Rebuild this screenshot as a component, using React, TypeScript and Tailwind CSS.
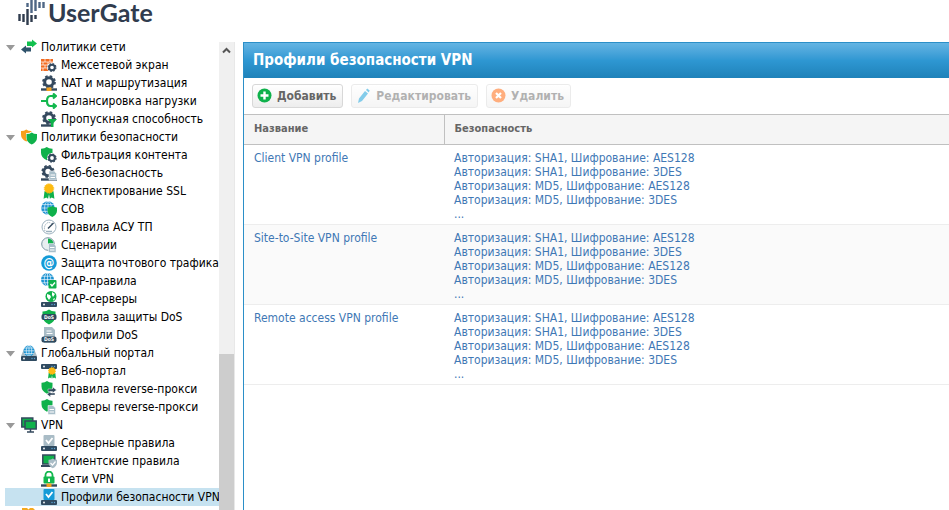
import type { ReactNode } from "react";

const NAVY = "#34495e";
const GREEN = "#0fb14b";

const SHIELD = "M0 1.5Q3 1.6 5 0Q7 1.6 10 1.5V5Q10 9 5 11.5Q0 9 0 5Z";

function Shield({ x, y, fill, s = 1 }: { x: number; y: number; fill: string; s?: number }) {
  return <path d={SHIELD} fill={fill} transform={`translate(${x} ${y}) scale(${s})`} />;
}

function Gear({ x, y, r, color = NAVY }: { x: number; y: number; r: number; color?: string }) {
  return (
    <g fill="none" stroke={color}>
      <circle cx={x} cy={y} r={r} strokeWidth={r * 0.7} />
      <circle cx={x} cy={y} r={r * 1.4} strokeWidth={r * 0.4} strokeDasharray={`${r * 0.6} ${r * 0.5}`} />
    </g>
  );
}

function Server({ y = 11, h = 5, x = 0, w = 16 }: { y?: number; h?: number; x?: number; w?: number }) {
  return (
    <g>
      <rect x={x} y={y} width={w} height={h} rx="1" fill="#2f4a60" />
      <circle cx={x + 3} cy={y + h / 2} r="0.9" fill="#fff" />
      <circle cx={x + w - 5} cy={y + h / 2} r="0.7" fill="#5fa8d8" />
      <circle cx={x + w - 2.5} cy={y + h / 2} r="0.7" fill="#5fa8d8" />
    </g>
  );
}

function Globe({ x, y, r, color = "#1d93d2" }: { x: number; y: number; r: number; color?: string }) {
  return (
    <g>
      <circle cx={x} cy={y} r={r} fill={color} />
      <g fill="none" stroke="#fff" strokeWidth="0.6">
        <ellipse cx={x} cy={y} rx={r / 2} ry={r} />
        <path d={`M${x} ${y - r}v${r * 2}M${x - r} ${y}h${r * 2}M${x - r * 0.9} ${y - r / 2}h${r * 1.8}M${x - r * 0.9} ${y + r / 2}h${r * 1.8}`} />
      </g>
    </g>
  );
}

function Doc({ x, y }: { x: number; y: number }) {
  return (
    <g>
      <path d={`M${x} ${y}h5l2.5 2.5v6.5h-7.5z`} fill="#a9bfca" stroke="#fff" strokeWidth="0.5" />
      <path d={`M${x + 1.5} ${y + 4}h4.5M${x + 1.5} ${y + 6.5}h4.5`} stroke="#fff" strokeWidth="1" />
    </g>
  );
}

function Medal({ x, y, r }: { x: number; y: number; r: number }) {
  return (
    <g>
      <path d={`M${x - r} ${y + r * 0.6}h${r * 2}l${r * 0.2} ${r * 1.7}l-${r * 0.6} -${r * 0.3}l-${r * 0.4} ${r * 0.3}l-${r * 0.2} -${r}l-${r * 0.2} ${r}l-${r * 0.4} -${r * 0.3}l-${r * 0.6} ${r * 0.3}z`} fill={GREEN} />
      <circle cx={x} cy={y} r={r} fill="#fdbb11" />
      <circle cx={x} cy={y} r={r * 1.05} fill="none" stroke="#fdbb11" strokeWidth="1" strokeDasharray="1.3 0.8" />
    </g>
  );
}

const Network = () => (
  <>
    <path d="M0 14.5h16" stroke={NAVY} strokeWidth="2.4" />
    <rect x="5.5" y="12.5" width="5" height="3.5" fill="#f5a01d" />
  </>
);

const DosLabel = ({ y }: { y: number }) => (
  <>
    <rect x="0.5" y={y} width="15" height="6" rx="2" fill="#2f4a60" />
    <text x="8" y={y + 4.8} textAnchor="middle" fontSize="5" fontWeight="700" fill="#fff">DoS</text>
  </>
);

const icons: Record<string, ReactNode> = {
  arrows: (
    <>
      <path d="M6 2.500h5V0.500l5 4-5 4V7H6z" fill="#12c04f" />
      <path d="M10 8.500H5V6.500l-5 4 5 4v-2h5z" fill="#2f536b" />
    </>
  ),
  firewall: (
    <>
      <path d="M0 2h12v12H0z" fill="#f26b21" />
      <path d="M0 5h12M0 8h12M0 11h12M4 2v3M9 2v3M2 5v3M7 5v3M4 8v3M2 11v3" stroke="#fff" strokeWidth="0.7" />
      <circle cx="11" cy="10.500" r="5" fill="#fff" />
      <Gear x={11} y={10.5} r={2.8} />
    </>
  ),
  nat: (
    <>
      <Gear x={8} y={7} r={4.3} />
      <Network />
    </>
  ),
  balance: (
    <path d="M0 8h5M15 3H9.500Q6 3 6 8T9.500 13H15M12 0.500L15 3l-3 2.500M12 10.500L15 13l-3 2.500" fill="none" stroke="#12b84e" strokeWidth="2.2" />
  ),
  bandwidth: (
    <>
      <Gear x={8} y={7} r={4.3} />
      <path d="M0 14.500h11" stroke={NAVY} strokeWidth="2.400" />
      <path d="M6.500 8h9.500l-3.500 4v4h-2.500v-4z" fill={GREEN} />
    </>
  ),
  shields: (
    <>
      <Shield x={0} y={0.5} fill="#f8a01b" s={1.05} />
      <Shield x={5} y={2.5} fill="#fff" s={1.15} />
      <Shield x={5.5} y={3.5} fill={GREEN} s={1.05} />
    </>
  ),
  shieldGear: (
    <>
      <Shield x={0} y={0} fill={GREEN} s={1.15} />
      <circle cx="11" cy="11" r="5" fill="#fff" />
      <Gear x={11} y={11} r={2.9} />
    </>
  ),
  web: (
    <>
      <Gear x={7} y={6.5} r={4.1} />
      <path d="M0 14.500h16" stroke={NAVY} strokeWidth="2.400" />
      <Doc x={8} y={6} />
    </>
  ),
  medal: <Medal x={8} y={5.5} r={4.5} />,
  globeShield: (
    <>
      <Globe x={7} y={7} r={6.8} />
      <Shield x={6.5} y={5} fill={GREEN} s={0.95} />
    </>
  ),
  gauge: (
    <>
      <circle cx="8" cy="8" r="7" fill="#fff" stroke="#9db2bf" />
      <path d="M4 12Q2.500 8 5 5t6 0" fill="none" stroke="#8da4b2" strokeDasharray="1.200 1" />
      <path d="M7 9.500L12.500 4" stroke={NAVY} strokeWidth="1.500" />
      <path d="M5 12.500h6" stroke="#9db2bf" strokeWidth="1.500" />
    </>
  ),
  scenario: (
    <>
      <circle cx="7" cy="7" r="6.300" fill="#e8eef1" stroke="#7d97a5" />
      <path d="M7 7V1.500A5.500 5.500 0 0 1 12.500 7z" fill={GREEN} />
      <Doc x={7.5} y={6.5} />
    </>
  ),
  mail: (
    <>
      <circle cx="8" cy="8" r="7.800" fill="#159bd7" />
      <text x="8" y="12" textAnchor="middle" fontSize="12" fontWeight="700" fill="#fff">@</text>
    </>
  ),
  icapRule: (
    <>
      <Globe x={6.5} y={6.5} r={6.5} />
      <rect x="7.500" y="7" width="8" height="8.500" rx="1" fill={GREEN} />
      <path d="M9.500 11l1.500 2 3-3.500" fill="none" stroke="#fff" strokeWidth="1.300" />
    </>
  ),
  icapServer: (
    <>
      <circle cx="10" cy="5.500" r="5.500" fill={GREEN} />
      <path d="M6 3l3 1 1 2-2 3-2-3zM11 1l3 2-2 3-1-2zM12 8l2-1-1 3z" fill="#fff" />
      <Server />
    </>
  ),
  dosRule: (
    <>
      <Shield x={1.5} y={0.5} fill={GREEN} s={1.3} />
      <DosLabel y={5} />
    </>
  ),
  dosProfile: (
    <>
      <path d="M3 0h8l3 3v13H3z" fill="#a9bcc6" />
      <path d="M5.500 4h5M5.500 6.500h6" stroke="#fff" />
      <DosLabel y={9.5} />
    </>
  ),
  portal: (
    <>
      <path d="M3 4h10l3 7H0z" fill="#a9bcc6" />
      <Globe x={8} y={5.8} r={5.5} />
      <Server />
    </>
  ),
  webPortal: (
    <>
      <Server y={1} h={5} />
      <Medal x={11} y={8} r={3.3} />
    </>
  ),
  reverseRule: (
    <>
      <Shield x={0.5} y={0} fill={GREEN} s={1.1} />
      <path d="M7 8h4.500V6l4 3-4 3v-1.500H7zM14 12h-4.500v-1.500l-3.500 2.800 3.500 2.700v-2h4.500z" fill={NAVY} stroke="#fff" strokeWidth="0.400" />
    </>
  ),
  reverseServer: (
    <>
      <Shield x={0.5} y={0} fill={GREEN} s={1.1} />
      <Doc x={7} y={6.5} />
    </>
  ),
  vpn: (
    <>
      <path d="M0.800 1h11v9h-11z" fill={GREEN} stroke={NAVY} strokeWidth="1.500" />
      <path d="M4 4h11.200v8H4z" fill={GREEN} stroke={NAVY} strokeWidth="1.500" />
      <path d="M9.500 12v3M6 15h7" stroke={NAVY} strokeWidth="1.500" />
    </>
  ),
  serverRule: (
    <>
      <rect x="2.500" y="0" width="11" height="11" rx="1" fill="#a9bcc6" />
      <path d="M5 5l2.500 3 4-5" fill="none" stroke="#fff" strokeWidth="1.800" />
      <Server />
    </>
  ),
  clientRule: (
    <>
      <path d="M1.800 2h12v9h-12z" fill={GREEN} stroke={NAVY} strokeWidth="1.500" />
      <path d="M0 13h10" stroke={NAVY} strokeWidth="2" />
      <Shield x={7.5} y={5.5} fill="#a9bcc6" s={0.85} />
      <path d="M9.500 10l2 2 3-3.500" fill="none" stroke="#fff" strokeWidth="1.200" />
    </>
  ),
  lock: (
    <>
      <path d="M4.500 6V4a3.500 3.500 0 0 1 7 0v2" fill="none" stroke="#12b84e" strokeWidth="1.800" />
      <rect x="2.500" y="5.500" width="11" height="7" rx="1" fill="#12b84e" />
      <path d="M8 7.500v3.500" stroke="#fff" strokeWidth="2" />
      <Network />
    </>
  ),
  vpnProfile: (
    <>
      <rect x="2.500" y="0" width="11" height="11" rx="1" fill="#159bd7" />
      <path d="M5 5l2.500 3 4-5" fill="none" stroke="#fff" strokeWidth="1.800" />
      <Server />
    </>
  ),
  folder: <path d="M1 1h5l1.500 1.500L9 1h3l2 2v12H1z" fill="#f5a91d" />,
};

const tree = [
  {
    icon: "arrows",
    label: "Политики сети",
    items: [
      ["firewall", "Межсетевой экран"],
      ["nat", "NAT и маршрутизация"],
      ["balance", "Балансировка нагрузки"],
      ["bandwidth", "Пропускная способность"],
    ],
  },
  {
    icon: "shields",
    label: "Политики безопасности",
    items: [
      ["shieldGear", "Фильтрация контента"],
      ["web", "Веб-безопасность"],
      ["medal", "Инспектирование SSL"],
      ["globeShield", "СОВ"],
      ["gauge", "Правила АСУ ТП"],
      ["scenario", "Сценарии"],
      ["mail", "Защита почтового трафика"],
      ["icapRule", "ICAP-правила"],
      ["icapServer", "ICAP-серверы"],
      ["dosRule", "Правила защиты DoS"],
      ["dosProfile", "Профили DoS"],
    ],
  },
  {
    icon: "portal",
    label: "Глобальный портал",
    items: [
      ["webPortal", "Веб-портал"],
      ["reverseRule", "Правила reverse-прокси"],
      ["reverseServer", "Серверы reverse-прокси"],
    ],
  },
  {
    icon: "vpn",
    label: "VPN",
    items: [
      ["serverRule", "Серверные правила"],
      ["clientRule", "Клиентские правила"],
      ["lock", "Сети VPN"],
      ["vpnProfile", "Профили безопасности VPN"],
    ],
  },
];

const ACTIVE = "vpnProfile";

const profiles = ["Client VPN profile", "Site-to-Site VPN profile", "Remote access VPN profile"];

const security = [
  "Авторизация: SHA1, Шифрование: AES128",
  "Авторизация: SHA1, Шифрование: 3DES",
  "Авторизация: MD5, Шифрование: AES128",
  "Авторизация: MD5, Шифрование: 3DES",
  "...",
];

function TreeIcon({ name }: { name: string }) {
  return (
    <svg viewBox="0 0 16 16" className="size-4 shrink-0" aria-hidden="true">
      {icons[name]}
    </svg>
  );
}

function Logo() {
  return (
    <div className="flex h-[38px] shrink-0 items-start pl-[17px] text-[#303c4e]">
      <svg viewBox="0 0 29 26" className="mr-[2px] h-[26px] w-[29px] shrink-0" aria-hidden="true">
        <path d="M2.500 14v7M6.500 14v8M10.500 9v16M14.500 15v7M18.500 15v4" stroke="#303c4e" strokeWidth="2.400" />
        <path d="M10.500 3v4M14.500 0v13M18.500 0v11M22.500 2v6M26.500 2v6" stroke="#4f6785" strokeWidth="2.400" />
      </svg>
      <span className="font-[Lato] text-[25px] leading-6 font-bold">UserGate</span>
    </div>
  );
}

function Sidebar() {
  return (
    <aside className="flex w-[235px] shrink-0 flex-col overflow-hidden">
      <Logo />
      <div className="flex min-h-0 flex-1">
        <nav className="min-w-0 flex-1 overflow-hidden pl-[5px]">
          {tree.map((group) => (
            <div key={group.icon}>
              <button type="button" className="flex h-[18px] w-full items-center whitespace-nowrap">
                <svg viewBox="0 0 16 16" className="size-4 shrink-0" aria-hidden="true">
                  <path d="M1 6h9l-4.500 5.500z" fill="#999" />
                </svg>
                <TreeIcon name={group.icon} />
                <span className="ml-1">{group.label}</span>
              </button>
              {group.items.map(([icon, label]) => (
                <a
                  key={icon}
                  href="#"
                  className={`flex h-[18px] items-center gap-1 pl-9 whitespace-nowrap ${icon === ACTIVE ? "bg-[#c6e2f0]" : ""}`}
                >
                  <TreeIcon name={icon} />
                  {label}
                </a>
              ))}
            </div>
          ))}
          <div className="flex h-[18px] items-center pl-4">
            <TreeIcon name="folder" />
          </div>
        </nav>
        <div className="mt-1 w-4 shrink-0 border-r border-[#e8e8e8] bg-[#f0f0f0]">
          <svg viewBox="0 0 15 17" className="h-[17px] w-full" aria-hidden="true">
            <path d="M4 10.500l3.500-3.500 3.500 3.500" fill="none" stroke="#555" strokeWidth="2" />
          </svg>
          <div className="mt-[295px] h-full bg-[#cdcdcd]" />
        </div>
      </div>
    </aside>
  );
}

interface ToolButtonProps {
  label: string;
  icon: ReactNode;
  disabled?: boolean;
}

function ToolButton({ label, icon, disabled }: ToolButtonProps) {
  return (
    <button
      type="button"
      disabled={disabled}
      className="flex h-6 items-center gap-1 rounded-[3px] border border-[#d8d8d8] bg-linear-to-b from-white to-[#ededed] pr-[6px] pl-1 font-bold text-[#666] disabled:opacity-50"
    >
      <svg viewBox="0 0 16 16" className="size-4 shrink-0" aria-hidden="true">
        {icon}
      </svg>
      {label}
    </button>
  );
}

function Toolbar() {
  return (
    <div className="flex h-9 items-center gap-2 px-2">
      <ToolButton
        label="Добавить"
        icon={
          <>
            <circle cx="7.500" cy="7.500" r="7" fill="#0fb14b" />
            <path d="M7.500 3.500v8M3.500 7.500h8" stroke="#fff" strokeWidth="2.400" />
          </>
        }
      />
      <ToolButton
        label="Редактировать"
        disabled
        icon={<path d="M2 15l1-4.500L9 3l3 2.500L6 13zM10 2l1.200-1.500 2.500 2L12.700 4.500z" fill="#0a9ad7" />}
      />
      <ToolButton
        label="Удалить"
        disabled
        icon={
          <>
            <circle cx="7.500" cy="7.500" r="7" fill="#ff6000" />
            <path d="M5 5l5 5M10 5l-5 5" stroke="#fff" strokeWidth="2.200" />
          </>
        }
      />
    </div>
  );
}

function ProfilesTable() {
  return (
    <table className="w-full table-fixed border-collapse text-left">
      <thead>
        <tr className="h-[30px] border-y border-[#c0c0c0] bg-[#f5f5f5] text-[11px] text-[#666]">
          <th className="w-[200px] border-r border-[#c0c0c0] px-[10px]">Название</th>
          <th className="px-[10px]">Безопасность</th>
        </tr>
      </thead>
      <tbody className="text-[#3f78b5]">
        {profiles.map((name) => (
          <tr key={name} className="h-20 border-b border-[#ededed] align-top leading-[14px] even:bg-[#fafafa]">
            <td className="px-[10px] pt-[6px]">{name}</td>
            <td className="px-[10px] pt-[6px]">
              {security.map((line) => (
                <div key={line}>{line}</div>
              ))}
            </td>
          </tr>
        ))}
      </tbody>
    </table>
  );
}

export default function App() {
  return (
    <div className="flex h-screen overflow-hidden bg-white font-['DejaVu_Sans_Condensed','DejaVu_Sans',sans-serif] text-[12px] text-black">
      <Sidebar />
      <main className="mt-[42px] ml-2 min-w-0 flex-1 border-l border-l-[#2b8fc8]">
        <h1 className="flex h-9 items-center border-t border-[#2b8fc8] bg-linear-to-b from-[#63b4e3] via-[#2e97d2] to-[#1f82b9] px-[9px] text-[15px] font-bold text-white">
          Профили безопасности VPN
        </h1>
        <Toolbar />
        <ProfilesTable />
      </main>
    </div>
  );
}
